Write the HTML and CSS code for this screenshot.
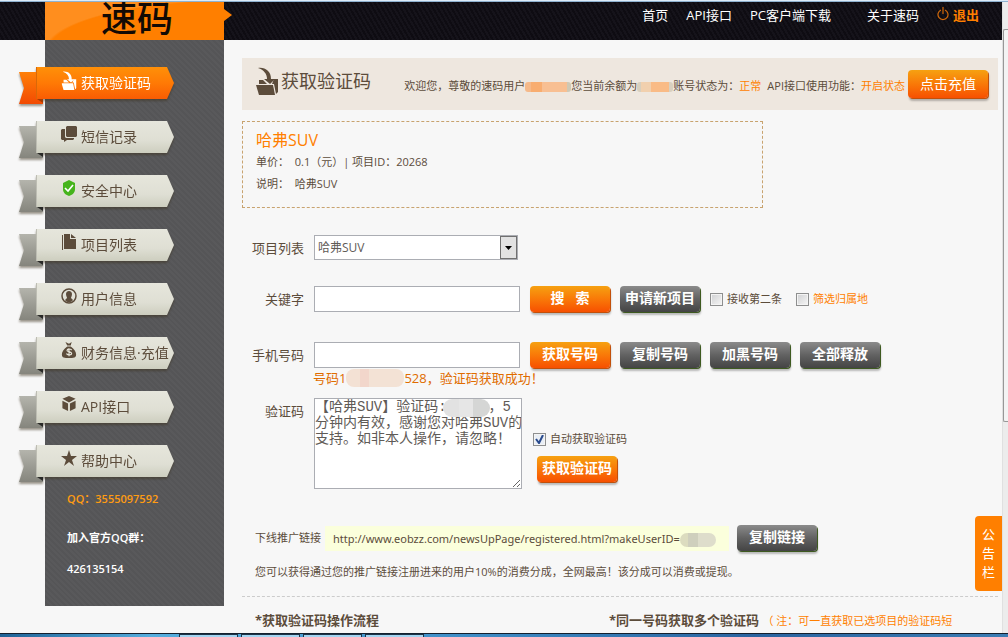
FILE: index.html
```html
<!DOCTYPE html>
<html lang="zh-CN">
<head>
    <meta charset="UTF-8">
    <meta name="viewport" content="width=device-width, initial-scale=1.0">
    <title>速码 - 获取验证码</title>
    <link rel="stylesheet" href="styles.css">
</head>
<body>

<!-- Shared icons -->
<svg class="sprite" aria-hidden="true">
    <symbol id="icon-inbox" viewBox="0 0 22 28">
        <path d="M2 1C9 0 15 4 15 12h4l-5 5-6-5h3C11 7 8 3 2 1z"/>
        <path d="M3 13h4l4 4H3zM18 12h4v13l-2 2-2-10h-2z"/>
        <path d="M0 18h17l2 10H3z"/>
    </symbol>
</svg>

<div class="window-edge"></div>

<div class="viewport">
    <div class="page">
        <header class="header">
            <a href="#" class="logo">速码</a>
            <nav class="top-nav">
                <a href="#">首页</a>
                <a href="#">API接口</a>
                <a href="#">PC客户端下载</a>
                <a href="#" class="about">关于速码</a>
                <a href="#" class="logout">
                    <svg viewBox="0 0 12 14" width="12" height="16"><path d="M4 3a5 5 0 1 0 4 0M6 0v7" fill="none" stroke="#d2690a" stroke-width="1.2"/></svg>
                    退出
                </a>
            </nav>
        </header>

        <div class="content">
            <aside class="sidebar">
                <ul class="menu">
                    <li class="active"><a href="#">
                        <svg viewBox="0 0 22 28"><use href="#icon-inbox"/></svg>获取验证码</a></li>
                    <li><a href="#">
                        <svg viewBox="0 0 16 16"><path d="M6 0h9l1 1v9l-1 1H6l-1-1V1z"/><path d="M0 4l1-1h3v8l1 1h8v1l-1 1H6l-3 2v-2H1l-1-1z"/></svg>短信记录</a></li>
                    <li><a href="#">
                        <svg viewBox="0 0 16 16"><path fill="#46b41c" d="M8 0l6 3v6c0 4-3 6-6 7-3-1-6-3-6-7V3z"/><path d="M4 8l3 3 5-6" fill="none" stroke="#fff" stroke-width="1.6"/></svg>安全中心</a></li>
                    <li><a href="#">
                        <svg viewBox="0 0 16 16"><path d="M3 0h6v5h6v10H3z"/><path d="M10 0l5 4h-5zM1 1h1v15h12v1H1z"/></svg>项目列表</a></li>
                    <li><a href="#">
                        <svg viewBox="0 0 16 16"><circle cx="8" cy="8" r="7" fill="none" stroke="#5c4c3b" stroke-width="1.5"/><path d="M5 6c0-4 6-4 6 0 0 2-1 3-1 4l2 2c-2 3-6 3-8 0l2-2c0-1-1-2-1-4z"/></svg>用户信息</a></li>
                    <li><a href="#">
                        <svg viewBox="0 0 16 18"><path d="M4 0l4 2 3-2-1 4H6zM6 5h4c4 3 6 6 6 9 0 4-3 4-8 4s-8 0-8-4c0-3 2-6 6-9z"/><path d="M11 9c-2-2-6-1-5 1 1 1 5 1 5 3s-4 2-6 0M8 7v9" fill="none" stroke="#e6e5da" stroke-width="1.3"/></svg>财务信息·充值</a></li>
                    <li><a href="#">
                        <svg viewBox="0 0 16 17"><path d="M8 0l7 3-7 4-7-4zM1 5l6 3v8l-6-3zM15 5L9 8v8l6-3z"/></svg>API接口</a></li>
                    <li><a href="#">
                        <svg viewBox="0 0 16 16"><path d="M8 0l2 6h6l-5 4 2 6-5-4-5 4 2-6-5-4h6z"/></svg>帮助中心</a></li>
                </ul>
                <p class="contact qq">QQ：3555097592</p>
                <p class="contact">加入官方QQ群：</p>
                <p class="contact">426135154</p>
            </aside>

            <main class="main">
                <section class="title-bar">
                    <h1><svg width="22" height="28" viewBox="0 0 22 28"><use href="#icon-inbox"/></svg>获取验证码</h1>
                    <p class="welcome">欢迎您，尊敬的速码用户<span class="mask mask-user"></span>您当前余额为<span class="mask mask-money"></span>账号状态为：<em>正常</em><span class="api">API接口使用功能：</span><em>开启状态</em></p>
                    <button class="btn recharge">点击充值</button>
                </section>

                <section class="project">
                    <h2>哈弗SUV</h2>
                    <p>单价： &nbsp;0.1（元）| 项目ID：20268</p>
                    <p>说明： &nbsp;哈弗SUV</p>
                </section>

                <form class="form">
                    <div class="row select-row">
                        <label for="project">项目列表</label>
                        <select id="project">
                            <option>哈弗SUV</option>
                        </select>
                    </div>

                    <div class="row">
                        <label for="keyword">关键字</label>
                        <input type="text" id="keyword">
                        <button type="button" class="btn">搜&nbsp;&nbsp; 索</button>
                        <button type="button" class="btn dark">申请新项目</button>
                        <div class="check">
                            <input type="checkbox" id="second">
                            <label for="second">接收第二条</label>
                        </div>
                        <div class="check region">
                            <input type="checkbox" id="region">
                            <label for="region">筛选归属地</label>
                        </div>
                    </div>

                    <div class="row">
                        <label for="phone">手机号码</label>
                        <input type="text" id="phone">
                        <button type="button" class="btn">获取号码</button>
                        <button type="button" class="btn dark">复制号码</button>
                        <button type="button" class="btn dark">加黑号码</button>
                        <button type="button" class="btn dark">全部释放</button>
                    </div>
                    <p class="result">号码1<span class="mask mask-phone"></span>528，验证码获取成功！</p>

                    <div class="row code-row">
                        <label for="code">验证码</label>
                        <div class="code-box">
                            <textarea id="code">【哈弗SUV】验证码:     ，5
分钟内有效，感谢您对哈弗SUV的
支持。如非本人操作，请忽略！</textarea>
                            <span class="mask mask-code"></span>
                        </div>
                        <div class="code-actions">
                            <div class="check">
                                <input type="checkbox" id="auto" checked>
                                <label for="auto">自动获取验证码</label>
                            </div>
                            <button type="button" class="btn">获取验证码</button>
                        </div>
                    </div>
                </form>

                <section class="promo">
                    <div class="promo-link">
                        <span>下线推广链接</span>
                        <a href="#" class="url">http://www.eobzz.com/newsUpPage/registered.html?makeUserID=<span class="mask mask-id"></span></a>
                        <button class="btn dark">复制链接</button>
                    </div>
                    <p>您可以获得通过您的推广链接注册进来的用户10%的消费分成，全网最高！该分成可以消费或提现。</p>
                </section>

                <section class="help">
                    <h3>*获取验证码操作流程</h3>
                    <h3>*同一号码获取多个验证码 <small>（ 注：可一直获取已选项目的验证码短</small></h3>
                </section>
            </main>
        </div>

        <button class="notice">公告栏</button>
    </div>
    <div class="scrollbar"><div class="thumb"></div></div>
</div>

<div class="taskbar">
    <span></span><span></span><span></span><span></span>
</div>

</body>
</html>
```
FILE: styles.css
```css
* {
    margin: 0;
    padding: 0;
    box-sizing: border-box;
}

body {
    height: 100vh;
    display: flex;
    flex-direction: column;
    overflow: hidden;
    background-color: #f7f7f7;
    color: #5c4c3b;
    font-family: "Open Sans", "Noto Sans CJK SC", sans-serif;
    font-size: 11px;
    line-height: 16px;
}

a {
    color: inherit;
    text-decoration: none;
}

button, input, select, textarea {
    font-family: inherit;
}

.sprite {
    position: absolute;
    width: 0;
    height: 0;
}

.window-edge {
    flex: none;
    height: 2px;
    background: linear-gradient(#dcebf8 1px, #8fb2d0 1px);
}

.viewport {
    flex: 1;
    min-height: 0;
    display: flex;
}

.page {
    flex: 1;
    min-width: 0;
    position: relative;
    overflow: hidden;
}

/* Header */
.header {
    display: flex;
    justify-content: space-between;
    height: 38px;
    padding: 0 23px 0 45px;
    background: repeating-linear-gradient(60deg, #15131a 0 2px, #0e0c12 2px 4px);
}

.logo {
    position: relative;
    width: 179px;
    padding-left: 56px;
    background: radial-gradient(ellipse 190px 50px at 190px 48px, #ff7f00 98%, #ff8e1e 100%);
    color: #120a04;
    font-family: "Noto Sans CJK SC", sans-serif;
    font-size: 36px;
    font-weight: 500;
    line-height: 28px;
    white-space: nowrap;
}

.logo::after {
    content: "";
    position: absolute;
    left: 100%;
    top: 7px;
    border: 6px solid transparent;
    border-left: 8px solid #ff7f00;
    border-right: 0;
}

.top-nav {
    display: flex;
    align-items: flex-start;
    gap: 18px;
    padding-top: 4px;
    color: #fff;
    font-size: 13px;
    line-height: 18px;
}

.top-nav .about {
    margin-left: 18px;
}

.top-nav .logout {
    display: flex;
    gap: 4px;
    color: #ff7f00;
    font-weight: bold;
}

/* Sidebar */
.content {
    display: flex;
    align-items: flex-start;
}

.sidebar {
    flex: none;
    width: 179px;
    margin-left: 45px;
    padding: 27px 0 14px;
    background: repeating-linear-gradient(45deg, #59595b 0 2px, #555557 2px 4px);
}

.menu {
    list-style: none;
    margin-left: -9px;
}

.menu li {
    position: relative;
    width: 138px;
    height: 32px;
    margin-bottom: 22px;
    filter: drop-shadow(0 2px 1px rgba(60, 50, 30, 0.5));
}

/* folded tail of the ribbon */
.menu li::before {
    content: "";
    position: absolute;
    left: -17px;
    top: 5px;
    width: 24px;
    height: 32px;
    background: linear-gradient(#b4b4ac, #85857d);
    clip-path: polygon(0 0, 100% 0, 100% 100%, 0 100%, 5px 50%);
}

.menu li::after {
    content: "";
    position: absolute;
    left: 1px;
    top: 32px;
    border-top: 4px solid #292927;
    border-left: 6px solid transparent;
}

.menu a {
    position: relative;
    display: flex;
    align-items: center;
    gap: 4px;
    height: 32px;
    padding-left: 24px;
    background: linear-gradient(#e6e6dc, #dfdfd4 60%, #cdcebf);
    clip-path: polygon(0 0, 131px 0, 100% 50%, 131px 100%, 0 100%);
    border-left: 1px solid #bdbdb3;
    font-size: 14px;
    white-space: nowrap;
}

.menu svg {
    flex: none;
    width: 16px;
    height: 16px;
    margin-bottom: 6px;
    fill: #5c4c3b;
}

.menu .active a {
    background: linear-gradient(#ff9008, #ff7a05 50%, #f95c03);
    border-left-color: #d96808;
    color: #fff;
}

.menu .active svg {
    height: 19px;
    fill: #fff;
}

.menu .active::before {
    background: linear-gradient(#ff8008, #f24a02);
}

.menu .active::after {
    border-top-color: #a43c02;
}

.contact {
    margin: 0 0 15px 22px;
    color: #fff;
    font-weight: 600;
}

.contact.qq {
    margin-top: -8px;
    margin-bottom: 23px;
    color: #ff9c12;
}

/* Main column */
.main {
    flex: 1;
    min-width: 0;
    padding: 18px 4px 0 18px;
}

.title-bar {
    display: flex;
    align-items: center;
    height: 52px;
    padding: 0 10px 0 14px;
    background-color: #eee7df;
    white-space: nowrap;
}

.title-bar h1 {
    display: flex;
    align-items: center;
    gap: 3px;
    margin-bottom: 6px;
    font-size: 18px;
    font-weight: normal;
}

.title-bar h1 svg {
    fill: #5c4c3b;
}

.welcome {
    margin: 4px 3px 0 auto;
}

.welcome em {
    color: #ff7f00;
    font-style: normal;
}

.api {
    margin-left: 6px;
}

/* Blurred out private data */
.mask {
    display: inline-block;
    vertical-align: middle;
    height: 10px;
    border-radius: 3px;
}

.mask-user {
    width: 46px;
    background: linear-gradient(90deg, #f5b98a 0 6px, #f8ad70 6px 17px, #f8bf92 17px 42px, #cfc8b4 42px);
}

.mask-money {
    width: 36px;
    background: linear-gradient(90deg, #d8cfbd 0 4px, #f1d0ae 4px 14px, #f9bb86 14px 32px, #d8d0c0 32px);
}

.mask-phone {
    width: 58px;
    height: 18px;
    border-radius: 8px;
    background: linear-gradient(90deg, #f3e1d4 0 14px, #f2d6cb 14px 23px, #f3e2d5 23px);
}

.mask-code {
    position: absolute;
    left: 129px;
    top: 1px;
    width: 47px;
    height: 18px;
    border-radius: 9px;
    background: linear-gradient(90deg, #e2e2e2 0 16px, #e6e6e6 16px 30px, #d5d6d5 30px);
}

.mask-id {
    width: 36px;
    height: 14px;
    border-radius: 7px;
    background: linear-gradient(90deg, #dcdcbf 0 8px, #cfcfbd 8px 18px, #deddcb 18px);
}

/* Buttons */
.btn {
    flex: none;
    width: 80px;
    height: 26px;
    padding-bottom: 2px;
    border: none;
    border-radius: 4px;
    background: linear-gradient(#f6a111, #f97908 50%, #f75001);
    box-shadow: 1px 1px 0 #c2500a, 1px 3px 2px rgba(0, 0, 0, 0.25);
    color: #fff;
    font-size: 14px;
    font-weight: bold;
    line-height: 20px;
    white-space: nowrap;
    cursor: pointer;
}

.btn.dark {
    background: linear-gradient(#8b8b8b, #626262 50%, #444);
    box-shadow: 1px 1px 0 #3e5a20, 1px 3px 2px rgba(0, 0, 0, 0.25);
}

.btn.recharge {
    height: 28px;
    padding-bottom: 0;
    font-weight: normal;
}

/* Project card */
.project {
    max-width: 521px;
    margin-top: 11px;
    padding: 7px 13px 12px;
    border: 1px dashed #c8a36f;
}

.project h2 {
    color: #ff7f00;
    font-size: 16px;
    font-weight: normal;
    line-height: 22px;
}

.project p {
    line-height: 22px;
}

/* Form */
.form {
    margin-top: 27px;
}

.row {
    display: flex;
    align-items: flex-start;
    gap: 10px;
    margin-bottom: 30px;
}

.row.select-row {
    margin-bottom: 25px;
}

.row > label {
    flex: none;
    width: 62px;
    font-size: 13px;
    line-height: 26px;
    text-align: right;
}

.row input[type="text"], select, textarea {
    width: 206px;
    height: 26px;
    border: 1px solid #abadb3;
    background-color: #fff;
    color: #5f5b57;
}

.row input[type="text"] {
    padding: 0 4px;
    font-size: 12px;
}

select {
    appearance: none;
    width: 204px;
    height: 25px;
    padding-left: 3px;
    background: #fff url("data:image/svg+xml,%3Csvg xmlns='http://www.w3.org/2000/svg' width='17' height='23'%3E%3Crect x='.5' y='.5' width='16' height='22' fill='%23e2e2e2' stroke='%23707070'/%3E%3Cpath d='M5 10h7l-3.500 4z'/%3E%3C/svg%3E") no-repeat right center;
    font-size: 12px;
}

.row select {
    width: 204px;
    height: 25px;
}

.check {
    display: flex;
    align-items: center;
    gap: 4px;
    height: 26px;
    white-space: nowrap;
}

.region {
    margin-left: 4px;
    color: #ff7f00;
}

input[type="checkbox"] {
    appearance: none;
    width: 13px;
    height: 13px;
    border: 1px solid #8e8f8f;
    background: linear-gradient(135deg, #cfd0d2, #f6f6f6);
    box-shadow: inset 0 0 0 1px #f4f4f4;
}

input[type="checkbox"]:checked {
    background: #e9eef5 url("data:image/svg+xml,%3Csvg xmlns='http://www.w3.org/2000/svg' width='11' height='11'%3E%3Cpath d='M2 5l3 4 4-8' fill='none' stroke='%23294a8c' stroke-width='2'/%3E%3C/svg%3E") center no-repeat;
}

.result {
    margin: -30px 0 10px 71px;
    color: #e06c00;
    font-size: 13px;
    line-height: 20px;
}

.result .mask {
    margin-top: -3px;
}

.code-row {
    margin-bottom: 36px;
}

.code-box {
    position: relative;
}

textarea {
    display: block;
    width: 208px;
    height: 91px;
    font-family: "Liberation Mono", "Noto Sans CJK SC", monospace;
    font-size: 14px;
    line-height: 16px;
    white-space: pre;
    overflow: hidden;
}

.code-actions {
    padding: 28px 0 0 5px;
}

.code-actions .check {
    margin: 0 0 4px -4px;
}

/* Promotion link */
.promo {
    padding: 0 0 16px 13px;
    border-bottom: 1px dashed #ccc;
}

.promo-link {
    display: flex;
    align-items: center;
    gap: 8px;
    margin-bottom: 13px;
    white-space: nowrap;
}

.url {
    width: 404px;
    margin-left: -4px;
    padding: 0 8px;
    background-color: #fbffdc;
    font-family: "Noto Sans", sans-serif;
    line-height: 25px;
}

.help {
    display: grid;
    grid-template-columns: 354px 1fr;
    padding: 14px 0 0 13px;
    white-space: nowrap;
}

.help h3 {
    font-size: 13px;
    line-height: 18px;
}

.help small {
    color: #ff7f00;
    font-size: 11px;
    font-weight: normal;
}

/* Notice tab on the right edge */
.notice {
    position: absolute;
    right: 0;
    top: 514px;
    width: 27px;
    height: 75px;
    padding: 0 7px;
    border: none;
    border-radius: 4px 0 0 4px;
    background-color: #ff7f00;
    color: #fff;
    font-size: 13px;
    line-height: 19px;
    cursor: pointer;
}

/* Browser frame */
.scrollbar {
    flex: none;
    width: 6px;
    padding-top: 27px;
    background-color: #ececec;
    border-left: 1px solid #e0e0e0;
}

.thumb {
    height: 65%;
    border: 1px solid #979797;
    border-right: none;
    border-radius: 2px 0 0 2px;
    background-color: #f3f3f3;
}

.taskbar {
    flex: none;
    display: flex;
    gap: 3px;
    height: 4px;
    padding-left: 179px;
    border-top: 1px solid #14202e;
    background: linear-gradient(90deg, #1f6296, #55aede 15%, #3f8fc8 45%, #2a64a0 75%, #3b7db4);
}

.taskbar span {
    width: 59px;
    border: 1px solid #1b3448;
    border-bottom: none;
    background-color: #a5d5f1;
}
```
